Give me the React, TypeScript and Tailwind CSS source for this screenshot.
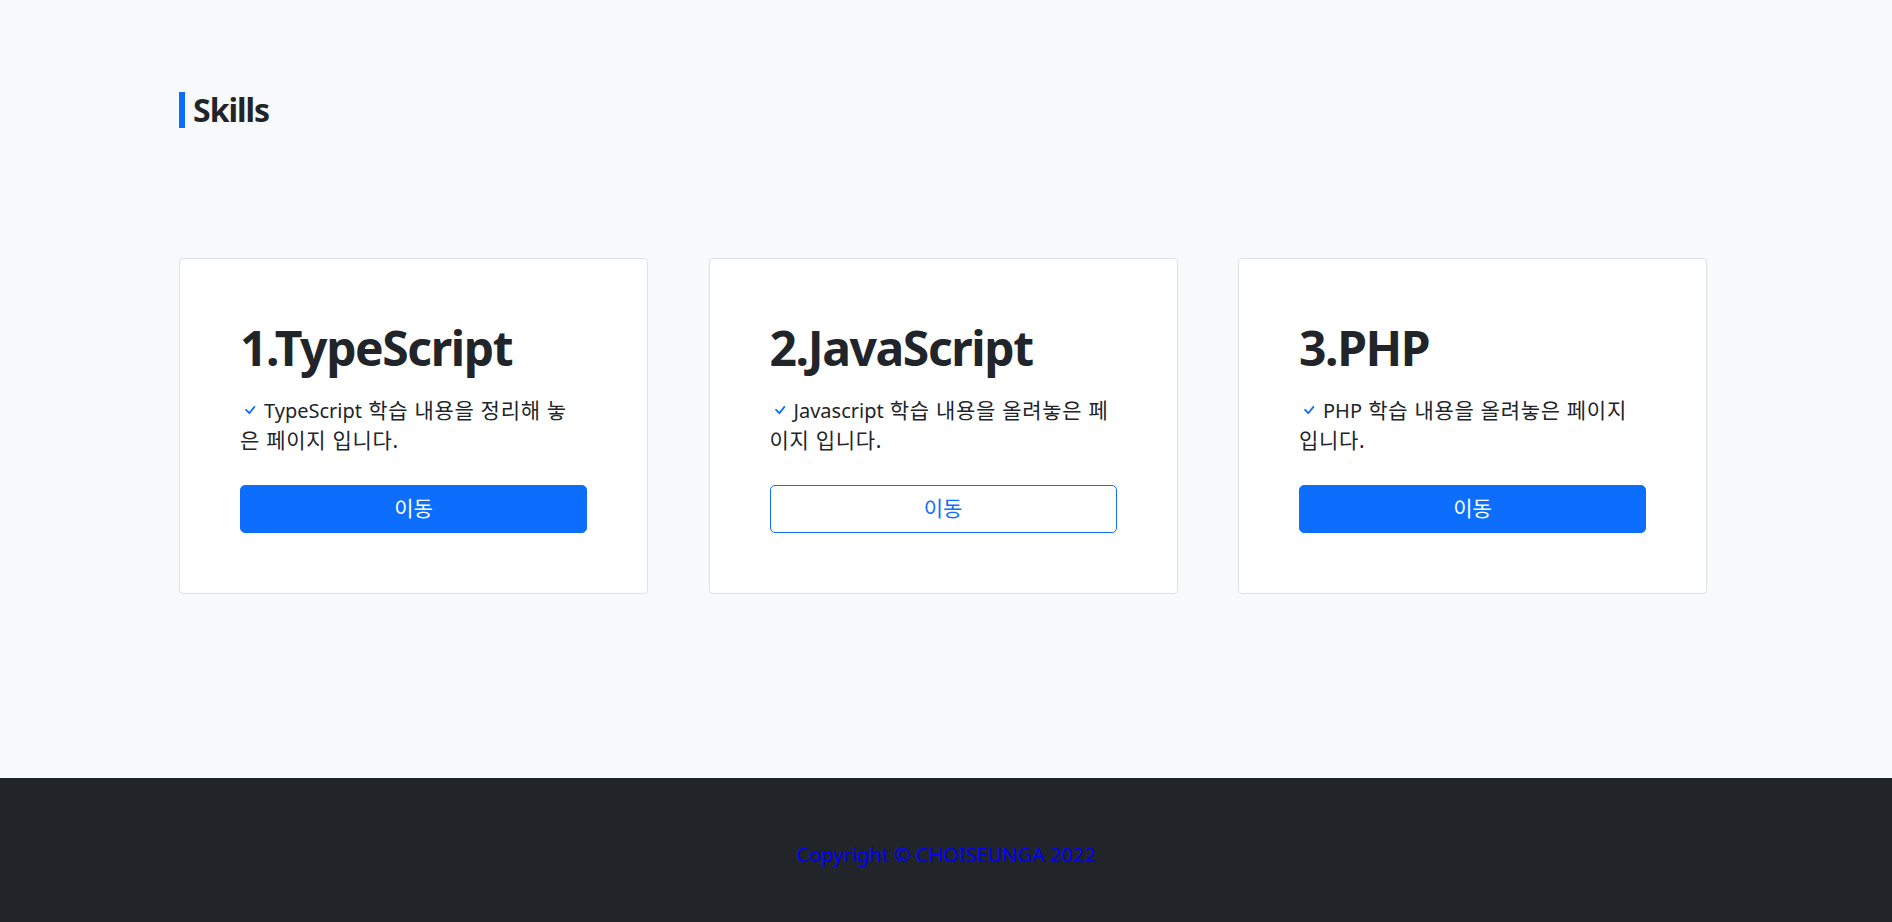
const skills = [
  {
    title: "1.TypeScript",
    lines: [["TypeScript", " 학습 내용을 정리해 놓"], ["", "은 페이지 입니다."]],
    outline: false,
  },
  {
    title: "2.JavaScript",
    lines: [["Javascript", " 학습 내용을 올려놓은 페"], ["", "이지 입니다."]],
    outline: true,
  },
  {
    title: "3.PHP",
    lines: [["PHP", " 학습 내용을 올려놓은 페이지"], ["", "입니다."]],
    outline: false,
  },
];

function CheckIcon() {
  return (
    <svg viewBox="0 0 16 16" className="inline-block size-5 -mt-1 mr-[4px] align-middle" fill="#0d6efd">
      <path d="M10.97 4.97a.75.75 0 0 1 1.07 1.05l-3.99 4.99a.75.75 0 0 1-1.08.02L4.324 8.384a.75.75 0 1 1 1.06-1.06l2.094 2.093 3.473-4.425a.267.267 0 0 1 .02-.022z" />
    </svg>
  );
}

export default function App() {
  return (
    <div className="min-h-screen bg-[#f8f9fa] text-[#212529] font-['Noto_Sans','Noto_Sans_CJK_KR',sans-serif]">
      <section className="pt-[92px] pb-[184px] pl-[179px]">
        <h2 className="border-l-[6px] border-[#0d6efd] pl-2 text-[32px] font-bold leading-9 tracking-[-1px]">Skills</h2>

        <div className="mt-[130px] grid grid-cols-[469px_469px_469px] gap-x-[60.5px]">
          {skills.map((s) => (
            <div key={s.title} className="bg-white border border-[#dee2e6] rounded-[4px] p-[60px]">
              <h1 className="text-[48px] font-bold leading-[1.2] mb-[19px] tracking-[-1.4px]">{s.title}</h1>
              <p className="text-[20px] leading-[30px] whitespace-nowrap">
                <CheckIcon />
                {s.lines[0][0]}
                <span className="text-[21px] leading-5 tracking-[0.7px]">{s.lines[0][1]}</span>
                <br />
                <span className="text-[21px] leading-5 tracking-[0.7px]">{s.lines[1][1]}</span>
              </p>
              <button
                className={
                  s.outline
                    ? "mt-[29px] w-full h-12 rounded-[5px] border border-[#0d6efd] bg-white text-[#0d6efd] text-[21px]"
                    : "mt-[29px] w-full h-12 rounded-[5px] border border-[#0d6efd] bg-[#0d6efd] text-white text-[21px]"
                }
              >
                이동
              </button>
            </div>
          ))}
        </div>
      </section>

      <footer className="bg-[#212529] py-[62px] text-center">
        <p className="text-[20px] leading-[30px] text-[#0000ff]">Copyright © CHOISEUNGA 2022</p>
      </footer>
    </div>
  );
}
